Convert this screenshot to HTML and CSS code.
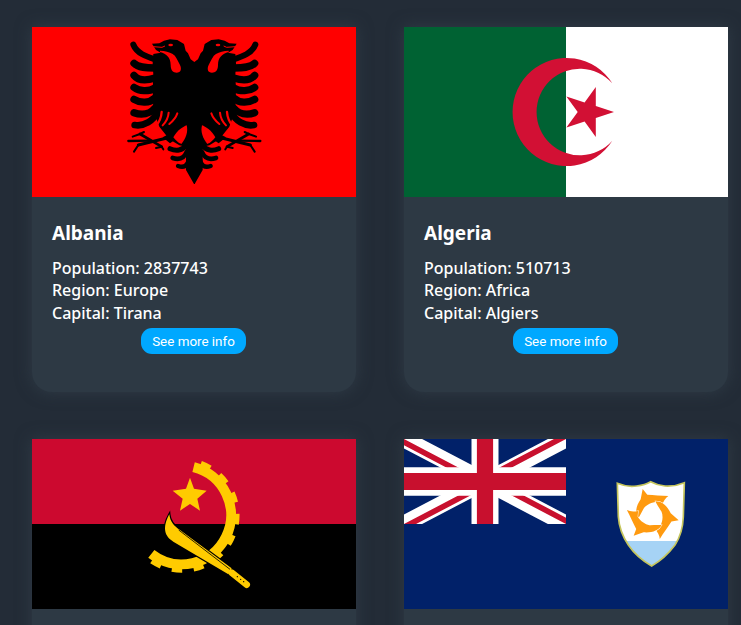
FILE: index.html
```html
<!DOCTYPE html>
<html lang="en">
<head>
<meta charset="utf-8">
<title>Countries</title>
<link rel="stylesheet" href="styles.css">
</head>
<body>
<main class="grid">
  <article class="card">
    <svg class="flag" viewBox="0 0 324 170" aria-label="Flag of Albania">
      <rect width="324" height="170" fill="#f00"/>
      <defs>
        <g id="eagle-half">
          <path d="M224,97 L212,88 L204,70 L197,62 L192,42 L172,30 L150,28 L132,32 L118,40 L96,41 L108,60 L122,68 L100,72 L98,100 L100,135 L98,180 L100,240 L118,290 L148,328 L178,346 L198,350 L198,420 L222,462 L224,462 Z"/>
          <g fill="none" stroke="#000" stroke-linecap="round">
            <path d="M105,88 C80,80 50,70 40,44" stroke-width="18"/>
            <path d="M105,114 C80,114 55,114 42,100" stroke-width="22"/>
            <path d="M105,144 C80,152 55,152 42,136" stroke-width="22"/>
            <path d="M105,174 C85,186 58,184 42,172" stroke-width="22"/>
            <path d="M105,204 C88,220 62,220 42,208" stroke-width="22"/>
            <path d="M105,234 C90,252 65,256 42,248" stroke-width="22"/>
            <path d="M112,247 C100,272 72,290 44,285" stroke-width="20"/>
            <path d="M198,346 C188,362 168,364 150,356" stroke-width="15"/>
            <path d="M200,366 C192,386 178,390 158,384" stroke-width="14"/>
            <path d="M206,390 C202,408 192,414 174,408" stroke-width="13"/>
            <path d="M150,322 L55,345" stroke-width="9"/>
            <path d="M125,350 L60,312" stroke-width="8"/>
            <path d="M90,332 L25,333" stroke-width="7"/>
            <path d="M55,345 L42,365 M60,312 L38,320 M60,312 L72,306 M125,350 L130,358 M125,350 L108,354" stroke-width="6"/>
          </g>
          <path d="M128,322 L150,340 L172,325 L195,285 L170,300 Z"/>
          <g fill="none" stroke="#f00" stroke-linecap="round">
            <path d="M108,288 C118,276 124,262 125,246" stroke-width="7"/>
            <path d="M128,286 C138,276 145,262 146,248" stroke-width="6"/>
            <path d="M148,282 C160,272 168,262 172,250" stroke-width="6"/>
          </g>
          <path d="M120,66 C140,72 152,82 152,105 C152,122 160,128 170,128 C182,128 186,118 180,105 C172,90 168,78 158,72 C148,66 135,62 120,62 Z" fill="#f00"/>
          <path d="M200,286 C190,290 172,300 160,322 C170,335 178,340 184,342 C198,325 205,305 200,286 Z" fill="#f00"/>
          <ellipse cx="152" cy="45" rx="7" ry="3.5" fill="#f00"/>
          <path d="M100,50 L126,52 L135,48" fill="none" stroke="#f00" stroke-width="3"/>
        </g>
      </defs>
      <g transform="translate(88 3) scale(.33333)">
        <use href="#eagle-half"/>
        <use href="#eagle-half" transform="translate(446 0) scale(-1 1)"/>
      </g>
    </svg>
    <div class="info">
      <h2 class="name">Albania</h2>
      <p class="fact">Population: 2837743</p>
      <p class="fact">Region: Europe</p>
      <p class="fact">Capital: Tirana</p>
      <button class="more" type="button">See more info</button>
    </div>
  </article>

  <article class="card">
    <svg class="flag" viewBox="0 0 324 170" aria-label="Flag of Algeria">
      <rect width="324" height="170" fill="#fff"/>
      <rect width="162" height="170" fill="#006233"/>
      <path d="M208.3,56.3 A54 54 0 1 0 208.3,113.7 A43.3 43.3 0 1 1 208.3,56.3 Z" fill="#d21034"/>
      <polygon points="210,85 191.8,79.1 191.8,60 180.6,75.5 162.4,69.5 173.7,85 162.4,100.5 180.6,94.5 191.8,110 191.8,90.9" fill="#d21034"/>
    </svg>
    <div class="info">
      <h2 class="name">Algeria</h2>
      <p class="fact">Population: 510713</p>
      <p class="fact">Region: Africa</p>
      <p class="fact">Capital: Algiers</p>
      <button class="more" type="button">See more info</button>
    </div>
  </article>

  <article class="card">
    <svg class="flag" viewBox="0 0 324 170" aria-label="Flag of Angola">
      <rect width="324" height="85" fill="#cc092f"/>
      <rect y="85" width="324" height="85" fill="#000"/>
      <g transform="translate(98 1) scale(.33333)">
        <polygon points="180,113 192,146 230,152 202,176 210,212 180,192 150,212 158,176 128,152 168,146" fill="#ffcb00"/>
        <g fill="none" stroke="#ffcb00">
          <path d="M190.8,81.4 A148 148 0 1 1 64,341.6" stroke-width="30"/>
          <path d="M193.7,70 A160 160 0 1 1 56.5,351" stroke-width="26" stroke-dasharray="30 33.4" stroke-dashoffset="-18.5"/>
        </g>
        <path d="M118,223 C120,245 132,258 150,270 L305,385 L295,403 L130,305 C105,290 95,265 118,223 Z" fill="#ffcb00" stroke="#000" stroke-width="7" paint-order="stroke"/>
        <path d="M146,270 L300,388" stroke="#000" stroke-width="2.5"/>
        <path d="M305,398 L350,434" stroke="#ffcb00" stroke-width="20" stroke-linecap="round"/>
        <circle cx="322" cy="410" r="2" fill="#000"/><circle cx="332" cy="418" r="2" fill="#000"/><circle cx="341" cy="425" r="2" fill="#000"/>
      </g>
    </svg>
    <div class="info">
      <h2 class="name">Angola</h2>
      <p class="fact">Population: 25868000</p>
      <p class="fact">Region: Africa</p>
      <p class="fact">Capital: Luanda</p>
      <button class="more" type="button">See more info</button>
    </div>
  </article>

  <article class="card">
    <svg class="flag" viewBox="0 0 324 170" aria-label="Flag of Anguilla">
      <rect width="324" height="170" fill="#012169"/>
      <svg width="162" height="85" viewBox="0 0 60 30" preserveAspectRatio="none">
        <clipPath id="uj"><path d="M30,15h30v15zv15h-30zh-30v-15zv-15h30z"/></clipPath>
        <path d="M0,0 60,30M60,0 0,30" stroke="#fff" stroke-width="6"/>
        <path d="M0,0 60,30M60,0 0,30" clip-path="url(#uj)" stroke="#c8102e" stroke-width="4"/>
        <path d="M30,0V30M0,15H60" stroke="#fff" stroke-width="10"/>
        <path d="M30,0V30M0,15H60" stroke="#c8102e" stroke-width="6"/>
      </svg>
      <g transform="translate(196 31) scale(.33333)">
        <defs>
          <clipPath id="shield"><path d="M52,40 Q80,52 110,48 Q135,45 152,35 Q170,45 195,48 Q225,50 253,38 L250,140 Q248,190 225,225 Q195,265 155,288 Q110,262 85,225 Q58,185 55,140 Z"/></clipPath>
          <path id="dolphin" d="M114,146 C104,130 108,108 122,88 L128,57 L142,74 C160,74 185,78 205,78 C196,84 190,94 186,106 L172,96 C155,96 140,104 132,114 C126,124 122,134 114,146 Z" fill="#ff9a0f" stroke="#fff" stroke-width="3" paint-order="stroke"/>
        </defs>
        <path d="M52,40 Q80,52 110,48 Q135,45 152,35 Q170,45 195,48 Q225,50 253,38 L250,140 Q248,190 225,225 Q195,265 155,288 Q110,262 85,225 Q58,185 55,140 Z" fill="#fff"/>
        <rect x="50" y="213" width="210" height="80" fill="#a6d3f5" clip-path="url(#shield)"/>
        <path d="M52,40 Q80,52 110,48 Q135,45 152,35 Q170,45 195,48 Q225,50 253,38 L250,140 Q248,190 225,225 Q195,265 155,288 Q110,262 85,225 Q58,185 55,140 Z" fill="none" stroke="#c5c55c" stroke-width="5"/>
        <use href="#dolphin"/>
        <use href="#dolphin" transform="rotate(120 155 135)"/>
        <use href="#dolphin" transform="rotate(240 155 135)"/>
      </g>
    </svg>
    <div class="info">
      <h2 class="name">Anguilla</h2>
      <p class="fact">Population: 13452</p>
      <p class="fact">Region: Americas</p>
      <p class="fact">Capital: The Valley</p>
      <button class="more" type="button">See more info</button>
    </div>
  </article>
</main>
</body>
</html>
```
FILE: styles.css
```css
* { box-sizing: border-box; }
html, body { margin: 0; background: #232c37; }
body { color: #fff; font-family: "Noto Sans", sans-serif; }
.grid {
  display: grid;
  grid-template-columns: 324px 324px;
  column-gap: 48px;
  row-gap: 47px;
  padding: 27px 0 27px 32px;
}
.card {
  height: 365px;
  background: #2d3944;
  border-radius: 0 0 20px 20px;
  box-shadow: 0 0 16px rgba(57, 70, 82, .6);
}
.flag { display: block; width: 324px; height: 170px; }
.info { padding: 23px 20px 0; display: flex; flex-direction: column; }
.name { margin: 0 0 11px; font-size: 19px; line-height: 26px; font-weight: 700; }
.fact { margin: 0; font-size: 16px; line-height: 22.4px; font-weight: 500; }
.more {
  align-self: center;
  width: 105px;
  height: 26px;
  margin: 4px 1px 0 0;
  padding: 0;
  border: 0;
  border-radius: 11px;
  background: #00a8ff;
  color: #fff;
  font: 13.4px Roboto, sans-serif;
}
```
